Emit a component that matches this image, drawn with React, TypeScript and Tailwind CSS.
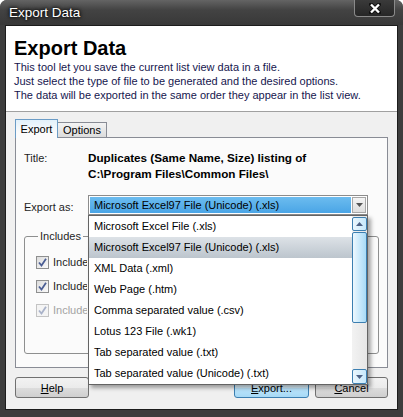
import React from "react";

const formats = [
  "Microsoft Excel File (.xls)",
  "Microsoft Excel97 File (Unicode) (.xls)",
  "XML Data (.xml)",
  "Web Page (.htm)",
  "Comma separated value (.csv)",
  "Lotus 123 File (.wk1)",
  "Tab separated value (.txt)",
  "Tab separated value (Unicode) (.txt)",
];
const selectedFormat = 1;

const includeOptions = [
  { label: "Include column headers", disabled: false },
  { label: "Include hidden columns", disabled: false },
  { label: "Include report header", disabled: true },
];

const App = () => {
  return (
    <div className="flex h-[417px] w-[403px] flex-col rounded-t-[7px] bg-[#3d3d3d] font-['Liberation_Sans',Arial,sans-serif] text-[11px]">
      {/* title bar */}
      <div className="flex h-[25px] shrink-0 items-start justify-between rounded-t-[7px] bg-[linear-gradient(#646464,#434343_40%,#383838)] pl-[9px] pr-[8px]">
        <span className="mt-[5px] text-[13.5px] leading-[16px] text-white [text-shadow:0_0_3px_#000,0_0_5px_#000]">
          Export Data
        </span>
        <CloseButton />
      </div>

      {/* client area */}
      <div className="mx-[5px] mb-[7px] flex flex-1 flex-col border border-[#1c1c1c] bg-[#f0f0f0]">
        {/* header */}
        <div className="h-[86px] shrink-0 border-b border-[#a0a0a0] bg-white pl-[8px] pt-[12px]">
          <h1 className="text-[20px] font-bold leading-[20px] text-black">Export Data</h1>
          <div className="mt-[2px] leading-[14px] text-[#16164e]">
            <p>This tool let you save the current list view data in a file.</p>
            <p>Just select the type of file to be generated and the desired options.</p>
            <p>The data will be exported in the same order they appear in the list view.</p>
          </div>
        </div>

        {/* body */}
        <div className="flex flex-1 flex-col px-[9px] pt-[7px]">
          <div className="flex items-end">
            <div className="relative z-10 -mb-px flex h-[19px] w-[43px] items-center justify-center border border-b-0 border-[#6b9cc6] bg-[linear-gradient(#e2f1fb,#fbfbfb_70%)] text-black">
              Export
            </div>
            <div className="flex h-[15px] w-[49px] items-center justify-center border border-l-0 border-b-0 border-[#898c95] bg-[linear-gradient(#f3f3f3,#dcdcdc)] text-black">
              Options
            </div>
          </div>

          {/* tab page */}
          <div className="relative h-[231px] border border-[#898c95] bg-[#fbfbfb] px-[8px] pt-[12px] text-[#1e1e1e]">
            <div className="grid grid-cols-[64px_1fr]">
              <span className="leading-[16px]">Title:</span>
              <div className="text-[11.7px] font-bold leading-[16px] text-black">
                <p>Duplicates (Same Name, Size) listing of</p>
                <p>C:\Program Files\Common Files\</p>
              </div>
            </div>

            <div className="mt-[13px] grid grid-cols-[64px_1fr] items-center">
              <span className="pt-[3px] leading-[14px]">Export as:</span>
              <FormatCombo />
            </div>

            <fieldset className="mt-[14px] h-[125px] rounded-[3px] border border-[#8e8f8f] pl-[11px] pt-[7px]">
              <legend className="ml-[2px] px-[2px] leading-[14px]">Includes</legend>
              {includeOptions.map((opt) => (
                <div key={opt.label} className="flex h-[24px] items-center gap-[4px]">
                  <Checkbox disabled={opt.disabled} />
                  {/* the open list covers the rest of the label */}
                  <span
                    className={`w-[34px] overflow-hidden whitespace-nowrap ${
                      opt.disabled ? "text-[#a3a3a3]" : "text-[#1e1e1e]"
                    }`}
                  >
                    {opt.label}
                  </span>
                </div>
              ))}
            </fieldset>
          </div>

          {/* buttons */}
          <div className="mt-[9px] flex">
            <DialogButton hotkey="H" rest="elp" className="w-[74px]" />
            <div className="ml-auto flex gap-[6px]">
              <DialogButton hotkey="E" rest="xport..." className="w-[75px]" primary />
              <DialogButton hotkey="C" rest="ancel" className="w-[73px]" />
            </div>
          </div>
        </div>
      </div>
    </div>
  );
};

const CloseButton = () => (
  <div className="flex h-[17px] w-[41px] items-center justify-center rounded-b-[4px] border border-t-0 border-[#8a8a8a] bg-[linear-gradient(#3a3a3a,#262626)]">
    <svg width="12" height="11" viewBox="0 0 12 11">
      <path d="M2 1.5 L10 9.5 M10 1.5 L2 9.5" stroke="#111" strokeWidth="4" strokeLinecap="square" />
      <path d="M2 1.5 L10 9.5 M10 1.5 L2 9.5" stroke="#fff" strokeWidth="2.4" />
    </svg>
  </div>
);

const Checkbox = ({ disabled }: { disabled?: boolean }) => (
  <div
    className={`flex h-[13px] w-[13px] shrink-0 items-center justify-center border ${
      disabled ? "border-[#c4c4c4] bg-[#f4f4f4]" : "border-[#8e8f8f] bg-[linear-gradient(135deg,#dcdcdc,#fafafa)]"
    }`}
  >
    <svg width="9" height="9" viewBox="0 0 9 9">
      <path
        d="M1 4.5 L3.5 7.5 L8 0.8"
        fill="none"
        stroke={disabled ? "#a9b2c9" : "#4b5e94"}
        strokeWidth="1.8"
      />
    </svg>
  </div>
);

interface DialogButtonProps {
  hotkey: string;
  rest: string;
  className?: string;
  primary?: boolean;
}

const DialogButton = ({ hotkey, rest, className, primary }: DialogButtonProps) => (
  <button
    className={`h-[21px] rounded-[3px] border text-[11px] leading-[14px] text-black ${
      primary
        ? "border-[#3c7fb1] bg-[linear-gradient(#eaf6fd,#d9f0fc_50%,#bee6fd_50%,#a7d9f5)]"
        : "border-[#707070] bg-[linear-gradient(#f2f2f2,#ebebeb_50%,#dddddd_50%,#cfcfcf)]"
    } ${className ?? ""}`}
  >
    <span className="underline underline-offset-1">{hotkey}</span>
    {rest}
  </button>
);

const FormatCombo = () => (
  <div className="relative h-[20px] w-[280px]">
    <div className="flex h-full border border-[#8c8c8c] bg-white p-px">
      <div className="flex flex-1 items-center bg-[linear-gradient(#6cbcef,#4aa5e6)] pl-[4px] text-black">
        {formats[selectedFormat]}
      </div>
      <div className="ml-px flex w-[14px] items-center justify-center border border-[#a7a7a7] bg-[linear-gradient(#f4f4f4,#dedede)]">
        <svg width="7" height="4" viewBox="0 0 7 4">
          <path d="M0 0 H7 L3.5 4 Z" fill="#555" />
        </svg>
      </div>
    </div>

    {/* open list */}
    <div className="absolute left-0 top-full z-20 flex h-[170px] w-[280px] border border-[#646464] bg-white shadow-[3px_3px_4px_rgba(0,0,0,0.35)]">
      <ul className="flex-1">
        {formats.map((f, i) => (
          <li
            key={f}
            className={`flex h-[21px] items-center pl-[5px] text-black ${
              i === selectedFormat ? "bg-[linear-gradient(#dde2e7,#bcc5cd)]" : ""
            }`}
          >
            {f}
          </li>
        ))}
      </ul>
      <ScrollBar />
    </div>
  </div>
);

const ScrollBar = () => (
  <div className="flex w-[15px] flex-col bg-[linear-gradient(90deg,#f2f2f2,#e6e6e6)] pt-px">
    <div className="flex h-[14px] items-center justify-center rounded-[2px] border border-[#3c7fb1] bg-[linear-gradient(90deg,#eaf6fd,#c6e8fb)]">
      <svg width="7" height="4" viewBox="0 0 7 4">
        <path d="M0 4 H7 L3.5 0 Z" fill="#4d6185" />
      </svg>
    </div>
    <div className="mt-px h-[91px] rounded-[2px] border border-[#3c7fb1] bg-[linear-gradient(90deg,#eef8fe,#cdebfc_45%,#a9dbf6)]" />
    <div className="flex-1" />
    <div className="flex h-[15px] items-center justify-center rounded-[2px] border border-[#3c7fb1] bg-[linear-gradient(90deg,#eaf6fd,#c6e8fb)]">
      <svg width="7" height="4" viewBox="0 0 7 4">
        <path d="M0 0 H7 L3.5 4 Z" fill="#4d6185" />
      </svg>
    </div>
  </div>
);

export default App;
